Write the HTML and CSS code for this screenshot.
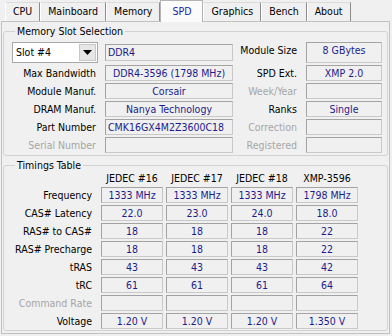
FILE: index.html
```html
<!DOCTYPE html>
<html>
<head>
<meta charset="utf-8">
<link rel="stylesheet" href="styles.css">
</head>
<body>
<div class="window">
  <div class="tabs">
    <div class="tab">CPU</div>
    <div class="tab">Mainboard</div>
    <div class="tab">Memory</div>
    <div class="tab active">SPD</div>
    <div class="tab">Graphics</div>
    <div class="tab">Bench</div>
    <div class="tab">About</div>
  </div>
  <div class="panel">
    <fieldset class="group slot">
      <legend>Memory Slot Selection</legend>
      <div class="slot-grid">
        <div class="select"><span class="sel-text">Slot #4</span><span class="sel-btn"><svg width="9" height="5" viewBox="0 0 9 5"><path d="M0 0h9L4.5 5z" fill="#000"/></svg></span></div>
        <div class="field left">DDR4</div>
        <div class="label">Module Size</div>
        <div class="field">8 GBytes</div>

        <div class="label">Max Bandwidth</div>
        <div class="field">DDR4-3596 (1798 MHz)</div>
        <div class="label">SPD Ext.</div>
        <div class="field">XMP 2.0</div>

        <div class="label">Module Manuf.</div>
        <div class="field">Corsair</div>
        <div class="label dis">Week/Year</div>
        <div class="field"></div>

        <div class="label">DRAM Manuf.</div>
        <div class="field">Nanya Technology</div>
        <div class="label">Ranks</div>
        <div class="field">Single</div>

        <div class="label">Part Number</div>
        <div class="field left">CMK16GX4M2Z3600C18</div>
        <div class="label dis">Correction</div>
        <div class="field"></div>

        <div class="label dis">Serial Number</div>
        <div class="field"></div>
        <div class="label dis">Registered</div>
        <div class="field"></div>
      </div>
    </fieldset>
    <fieldset class="group timings">
      <legend>Timings Table</legend>
      <div class="t-grid">
        <div></div>
        <div class="head">JEDEC #16</div>
        <div class="head">JEDEC #17</div>
        <div class="head">JEDEC #18</div>
        <div class="head">XMP-3596</div>

        <div class="label">Frequency</div>
        <div class="field">1333 MHz</div>
        <div class="field">1333 MHz</div>
        <div class="field">1333 MHz</div>
        <div class="field">1798 MHz</div>

        <div class="label">CAS# Latency</div>
        <div class="field">22.0</div>
        <div class="field">23.0</div>
        <div class="field">24.0</div>
        <div class="field">18.0</div>

        <div class="label">RAS# to CAS#</div>
        <div class="field">18</div>
        <div class="field">18</div>
        <div class="field">18</div>
        <div class="field">22</div>

        <div class="label">RAS# Precharge</div>
        <div class="field">18</div>
        <div class="field">18</div>
        <div class="field">18</div>
        <div class="field">22</div>

        <div class="label">tRAS</div>
        <div class="field">43</div>
        <div class="field">43</div>
        <div class="field">43</div>
        <div class="field">42</div>

        <div class="label">tRC</div>
        <div class="field">61</div>
        <div class="field">61</div>
        <div class="field">61</div>
        <div class="field">64</div>

        <div class="label dis">Command Rate</div>
        <div class="field"></div>
        <div class="field"></div>
        <div class="field"></div>
        <div class="field"></div>

        <div class="label">Voltage</div>
        <div class="field">1.20 V</div>
        <div class="field">1.20 V</div>
        <div class="field">1.20 V</div>
        <div class="field">1.350 V</div>
      </div>
    </fieldset>
  </div>
</div>
</body>
</html>
```

FILE: styles.css
```css
* { box-sizing: border-box; }
html, body {
  margin: 0;
  padding: 0;
  background: #f0f0f0;
}
body {
  font-family: "DejaVu Sans Condensed", "DejaVu Sans", sans-serif;
  font-stretch: condensed;
  font-size: 10.5px;
  color: #000;
  width: 392px;
  height: 336px;
  overflow: hidden;
}
.window {
  width: 392px;
  height: 336px;
  padding: 0 2px 2px 1px;
  display: flex;
  flex-direction: column;
}
.tabs {
  display: flex;
  height: 21px;
  padding-left: 4px;
  align-items: flex-end;
  position: relative;
  z-index: 1;
}
.tab {
  height: 19px;
  line-height: 17px;
  padding: 0 7px;
  border-top: 1px solid #dcdcdc;
  border-left: 1px solid #fff;
  border-right: 1px solid #8c8c8c;
  background: #f0f0f0;
  white-space: nowrap;
}
.tab.active {
  height: 22px;
  margin-bottom: -1px;
  line-height: 20px;
  padding: 0 11px;
  background: #fbfbfb;
  color: #1a1aa8;
  border: 1px solid #b4b4b4;
  border-bottom: none;
}
.panel {
  flex: 1;
  border: 1px solid #c2c2c2;
  background: #f0f0f0;
  padding: 3px 1px 2px 1px;
  display: flex;
  flex-direction: column;
}
.group {
  margin: 0;
  border: 1px solid #d2d2d2;
  border-radius: 3px;
  padding: 0 4px 2px 8px;
  min-width: 0;
}
.group legend {
  padding: 0 2px;
  margin-left: 3px;
  line-height: 13px;
}
.slot-grid {
  display: grid;
  grid-template-columns: 86px 128px 59px 76px;
  grid-template-rows: 21px repeat(5, 16px);
  column-gap: 7px;
  row-gap: 2px;
  padding-top: 4px;
}
.timings {
  margin-top: 3px;
  padding-bottom: 1px;
}
.t-grid {
  display: grid;
  grid-template-columns: 86px repeat(4, 62px);
  grid-template-rows: 13px repeat(8, 16px);
  column-gap: 3px;
  row-gap: 2px;
}
.t-grid .label { margin-right: 4px; }
.head {
  text-align: center;
  line-height: 13px;
  white-space: nowrap;
}
.label {
  text-align: right;
  line-height: 16px;
  padding-right: 2px;
  white-space: nowrap;
}
.label.dis { color: #a6a6a6; }
.field {
  border: 1px solid #c9c9c9;
  border-top-color: #a3a3a3;
  border-left-color: #a3a3a3;
  background: #f0f0f0;
  color: #1c1c8c;
  text-align: center;
  line-height: 14px;
  white-space: nowrap;
  overflow: hidden;
}
.slot-grid .field:nth-child(2) {
  height: 17px;
  align-self: center;
}
.field.left {
  text-align: left;
  padding-left: 2px;
}
.select {
  display: flex;
  align-items: stretch;
  background: #fff;
  border: 1px solid #a8a8a8;
  height: 21px;
}
.sel-text {
  flex: 1;
  line-height: 19px;
  padding-left: 3px;
  color: #000;
}
.sel-btn {
  width: 17px;
  margin: 1px;
  background: #e6e6e6;
  border: 1px solid #c8c8c8;
  display: flex;
  align-items: center;
  justify-content: center;
}
```
